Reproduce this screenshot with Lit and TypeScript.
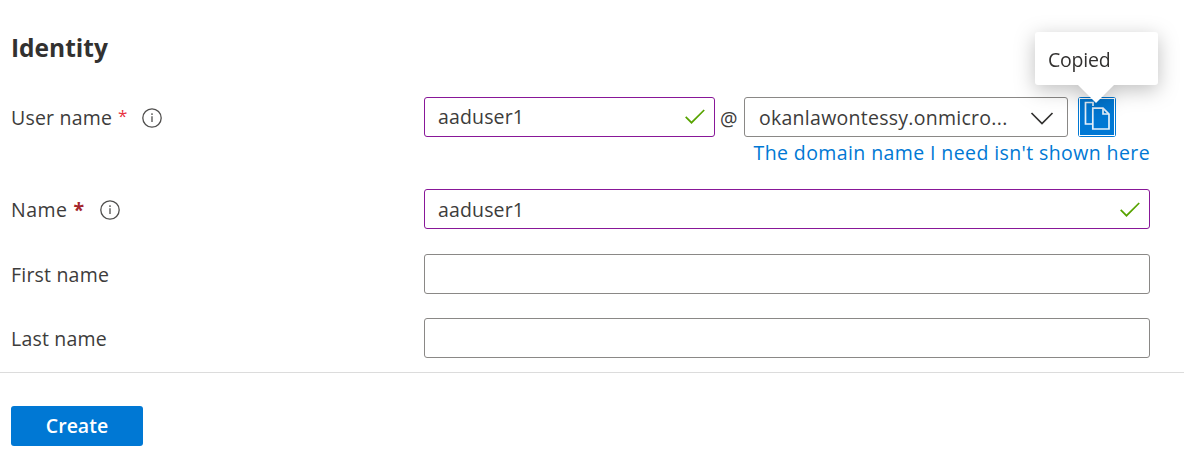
import { LitElement, html, css, svg } from "lit";
import { customElement } from "lit/decorators.js";

const infoIcon = html`<svg class="info" width="20" height="20" viewBox="0 0 20 20" fill="none">
  <circle cx="10" cy="10" r="9.2" stroke="#504f4e" stroke-width="1.3" />
  <path d="M10 8.2V14" stroke="#504f4e" stroke-width="1.3" />
  <circle cx="10" cy="6.1" r="0.9" fill="#504f4e" />
</svg>`;

const checkIcon = html`<svg class="check" width="20" height="16" viewBox="0 0 20 16" fill="none">
  <path d="M0.7 7.9L6.5 13.7L19.2 1" stroke="#57a300" stroke-width="1.7" />
</svg>`;

const copySheets = svg`
  <path d="M15 5.5V2H7.5V23.5H14.5" />
  <path d="M14.8 7.7H25L31 13.7V28.5H14.8Z" fill="#0078d4" />
  <path d="M25 7.7V13.5H31" />`;

@customElement("app-root")
export class AppRoot extends LitElement {
  static styles = css`
    :host {
      display: block;
      height: 460px;
      overflow: hidden;
      box-sizing: border-box;
      background: #fff;
      color: #3d3c3b;
      font-family: "Open Sans", "Noto Sans", sans-serif;
      font-size: 19.5px;
      line-height: 28px;
      white-space: nowrap;
    }
    * { box-sizing: border-box; }
    .form { height: 373px; padding: 31px 34px 0 11px; border-bottom: 1px solid #dcdcdc; }
    h2 { margin: 0 0 32px; font-size: 24.5px; line-height: 34px; font-weight: 700; color: #323130; }
    .row { display: grid; grid-template-columns: 413px 726px; height: 40px; }
    .row.user { height: 92px; }
    .row.name { margin-bottom: 25px; }
    .row.first { margin-bottom: 24px; }
    .label { display: flex; align-items: center; height: 40px; padding-top: 1px; letter-spacing: 0.2px; }
    .short { letter-spacing: 0.5px; }
    .star { color: #e8323f; margin-left: 6px; font-size: 17px; padding-bottom: 4px; letter-spacing: 0; }
    .star.bold { color: #a4262c; font-weight: 700; font-size: 19.5px; padding: 0; }
    .info { margin-left: 15px; }
    .name .info { margin-left: 16px; }
    .field {
      display: flex; align-items: center; justify-content: space-between;
      height: 40px; padding: 0 9px 0 13px; letter-spacing: 0.15px;
      border: 1px solid #8a8886; border-radius: 3px; background: #fff;
    }
    .valid { border-color: #881798; }
    .field.roomy { padding-top: 1px; }
    .account { display: grid; grid-template-columns: 291px 29px 324px 38px; align-items: start; }
    .at { padding: 8px 0 0 5px; }
    .domain { padding: 1px 13px 0 14px; letter-spacing: 0.27px; }
    .copy {
      position: relative; margin-left: 10px; width: 38px; height: 40px;
      background: #0078d4; border-radius: 3px;
    }
    .copy svg { display: block; }
    .tip {
      position: absolute; right: -42px; bottom: 52px; width: 123px; height: 53px;
      padding: 14px 0 0 13px; background: #fff; border-radius: 3px; color: #323130;
      letter-spacing: -0.2px;
      filter: drop-shadow(0 5px 10px rgba(0, 0, 0, 0.25));
    }
    .tip::after {
      content: ""; position: absolute; left: 42px; top: 52px;
      border: 19px solid transparent; border-top-color: #fff; border-bottom: 0;
    }
    .link { color: #0078d4; text-align: right; line-height: 32px; letter-spacing: 0.4px; }
    .footer { padding: 33px 11px 0; }
    button {
      display: block; width: 132px; height: 40px; border: 0; border-radius: 3px; padding: 0 0 1px;
      background: #0078d4; color: #fff; font: 600 19.5px "Open Sans", "Noto Sans", sans-serif;
    }
  `;

  render() {
    return html`
      <div class="form">
        <h2>Identity</h2>
        <div class="row user">
          <div class="label"><span>User name</span><span class="star">*</span>${infoIcon}</div>
          <div>
            <div class="account">
              <div class="field valid"><span>aaduser1</span>${checkIcon}</div>
              <span class="at">@</span>
              <div class="field domain">
                <span>okanlawontessy.onmicro...</span>
                <svg width="24" height="14" viewBox="0 0 24 14" fill="none">
                  <path d="M1.5 2L12 12.5L22.5 2" stroke="#323130" stroke-width="1.7" />
                </svg>
              </div>
              <div class="copy">
                <svg width="38" height="40" viewBox="0 0 38 40" fill="none" stroke="#e6f1fb" stroke-width="1.7">
                  <rect x="1.5" y="1.5" width="35" height="37" stroke="#fff" stroke-width="1" />
                  <g transform="translate(0 3.5)">${copySheets}</g>
                </svg>
                <div class="tip">Copied</div>
              </div>
            </div>
            <div class="link">The domain name I need isn't shown here</div>
          </div>
        </div>
        <div class="row name">
          <div class="label"><span class="short">Name</span><span class="star bold">*</span>${infoIcon}</div>
          <div class="field roomy valid"><span>aaduser1</span>${checkIcon}</div>
        </div>
        <div class="row first">
          <div class="label">First name</div>
          <div class="field"></div>
        </div>
        <div class="row">
          <div class="label">Last name</div>
          <div class="field"></div>
        </div>
      </div>
      <div class="footer"><button>Create</button></div>
    `;
  }
}
